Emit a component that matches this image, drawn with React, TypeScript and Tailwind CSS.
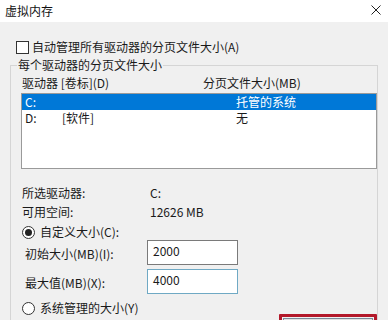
import React from "react";

const font = { fontFamily: '"Noto Sans CJK SC", "Noto Sans", sans-serif' };

function Radio({ checked }: { checked?: boolean }) {
  return (
    <span className="w-[13px] h-[13px] rounded-full border border-[#333] bg-white flex items-center justify-center shrink-0">
      {checked && <span className="w-[7px] h-[7px] rounded-full bg-[#222]" />}
    </span>
  );
}

export default function App() {
  return (
    <div
      className="w-[388px] h-[320px] bg-[#f0f0f0] overflow-hidden text-[12px] leading-[16px] text-[#1a1a1a]"
      style={font}
    >
      {/* Title bar */}
      <div className="h-[22px] bg-white flex items-center justify-between pl-[5px] pr-[7px]">
        <span className="text-[#111]">虚拟内存</span>
        <svg width="10" height="10" viewBox="0 0 10 10" className="mt-[-2px]">
          <path d="M0.5 0.5 L9.5 9.5 M9.5 0.5 L0.5 9.5" stroke="#222" strokeWidth="1" fill="none" />
        </svg>
      </div>

      {/* Auto manage checkbox */}
      <div className="pt-[17px] pl-[16px] flex items-center h-[33px]">
        <span className="w-[13px] h-[13px] border border-[#333] bg-white shrink-0" />
        <span className="ml-[3px]">自动管理所有驱动器的分页文件大小(A)</span>
      </div>

      {/* Group box */}
      <div className="relative ml-[10px] w-[368px] mt-[10px] border border-[#d5d5d5] pl-[10px] pb-[40px]">
        <span className="absolute left-[6px] top-[-9px] px-[1px] bg-[#f0f0f0]">每个驱动器的分页文件大小</span>

        {/* Header */}
        <div className="flex h-[16px] mt-[9px] pl-[1px]">
          <span className="w-[181px]">驱动器 [卷标](D)</span>
          <span>分页文件大小(MB)</span>
        </div>

        {/* List box */}
        <div className="mt-[2px] w-[356px] h-[76px] border border-[#9a9a9a] bg-white">
          <div className="flex h-[16px] items-center bg-[#0078d7] text-white pl-[3px]">
            <span className="w-[211px]">C:</span>
            <span>托管的系统</span>
          </div>
          <div className="flex h-[16px] items-center pl-[3px]">
            <span className="w-[37px]">D:</span>
            <span className="w-[174px]">[软件]</span>
            <span>无</span>
          </div>
        </div>

        {/* Info */}
        <div className="flex h-[18px] items-center mt-[15px] pl-[1px]">
          <span className="w-[128px]">所选驱动器:</span>
          <span>C:</span>
        </div>
        <div className="flex h-[18px] items-center mt-[1px] pl-[1px]">
          <span className="w-[128px]">可用空间:</span>
          <span>12626 MB</span>
        </div>

        {/* Custom size radio */}
        <div className="flex h-[16px] items-center mt-[3px] pl-[1px]">
          <Radio checked />
          <span className="ml-[5px]">自定义大小(C):</span>
        </div>

        <div className="flex h-[25px] items-center">
          <span className="w-[126px] pl-[4px] pt-[3px]">初始大小(MB)(I):</span>
          <div className="w-[91px] h-[25px] border border-[#7a7a7a] bg-white pl-[5px] pt-[2px]">2000</div>
        </div>
        <div className="flex h-[25px] items-center mt-[4px]">
          <span className="w-[126px] pl-[4px] pt-[3px]">最大值(MB)(X):</span>
          <div className="w-[91px] h-[25px] border border-[#6fa9c4] bg-white pl-[5px] pt-[2px]">4000</div>
        </div>

        {/* System managed radio + button */}
        <div className="flex items-start mt-[6px] pl-[1px]">
          <div className="flex h-[16px] items-center w-[257px]">
            <Radio />
            <span className="ml-[5px]">系统管理的大小(Y)</span>
          </div>
          <div className="mt-[14px] w-[98px] h-[30px] border-[3px] border-[#b3182a] rounded-[1px] p-[1px]">
            <div className="w-full h-full border border-[#7a8a99] bg-[#e1e1e1]" />
          </div>
        </div>
      </div>
    </div>
  );
}
